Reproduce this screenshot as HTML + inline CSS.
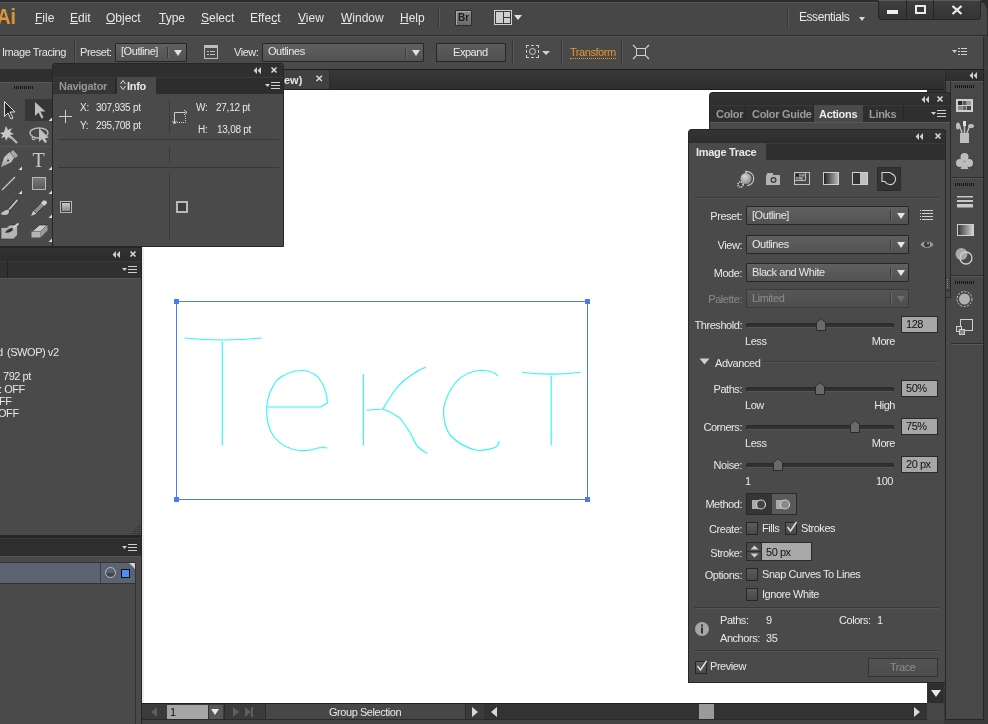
<!DOCTYPE html>
<html><head><meta charset="utf-8">
<style>
*{margin:0;padding:0;box-sizing:border-box}
html,body{width:988px;height:724px;overflow:hidden;background:#3e3e3e;font-family:"Liberation Sans",sans-serif;font-size:11px;color:#dcdcdc}
.a{position:absolute}
svg{will-change:transform}
.t{position:absolute;white-space:nowrap;line-height:1;letter-spacing:-0.45px;will-change:transform}
.menu{top:12px;font-size:12px;color:#e8e8e8;letter-spacing:0}
.menu u{text-decoration:underline;text-underline-offset:1px;text-decoration-thickness:1px}
.vsep{position:absolute;width:2px;border-left:1px solid #393939;border-right:1px solid #575757}
.dd{position:absolute;border:1px solid #262626;background:linear-gradient(#606060,#525252);border-radius:1px}
.dd .dv{position:absolute;top:3px;bottom:3px;width:2px;border-left:1px solid #3c3c3c;border-right:1px solid #6a6a6a}
.arr{position:absolute;width:0;height:0;border-left:4px solid transparent;border-right:4px solid transparent;border-top:6px solid #e0e0e0}
.btn{position:absolute;border:1px solid #262626;background:linear-gradient(#5c5c5c,#505050)}
.phdr{position:absolute;background:#2f2f2f}
.tabrow{position:absolute;background:#2d2d2d}
.pbody{position:absolute;background:#4a4a4a}
.tab{position:absolute;font-weight:bold;color:#9b9b9b;font-size:11px;letter-spacing:-0.3px}
</style></head><body>
<!-- ============ MENU BAR ============ -->
<div class="a" style="left:0;top:0;width:988px;height:36px;background:#474747;border-top:2px solid #2c2c2c;border-bottom:1px solid #2b2b2b"></div>
<div class="a" style="left:0;top:2px;width:988px;height:1px;background:#555"></div>
<div class="a" style="left:970px;top:0;width:18px;height:35px;background:#2c2c2c"></div>
<div class="a" style="left:970px;top:2px;width:18px;height:33px;background:#474747;border-radius:0 9px 0 0;border-top:1px solid #555;border-right:1px solid #2c2c2c"></div>
<div class="t" style="left:-3px;top:6px;font-size:22px;font-weight:bold;color:#e09a35;letter-spacing:0;transform:scaleX(0.85);transform-origin:left">Ai</div>
<div class="t menu" style="left:35px"><u>F</u>ile</div>
<div class="t menu" style="left:70px"><u>E</u>dit</div>
<div class="t menu" style="left:106px"><u>O</u>bject</div>
<div class="t menu" style="left:159px"><u>T</u>ype</div>
<div class="t menu" style="left:201px"><u>S</u>elect</div>
<div class="t menu" style="left:250px">Effe<u>c</u>t</div>
<div class="t menu" style="left:298px"><u>V</u>iew</div>
<div class="t menu" style="left:341px"><u>W</u>indow</div>
<div class="t menu" style="left:400px"><u>H</u>elp</div>
<div class="vsep" style="left:438px;top:8px;height:20px"></div>
<!-- Br -->
<div class="a" style="left:455px;top:10px;width:17px;height:16px;background:linear-gradient(#8c8c8c,#6a6a6a);border:1px solid #2e2e2e;border-radius:1px;box-shadow:inset 1px 1px 0 #a8a8a8"></div>
<div class="t" style="left:458px;top:13px;font-size:10px;font-weight:bold;color:#1e1e1e;letter-spacing:0">Br</div>
<!-- layout icon -->
<div class="a" style="left:494px;top:10px;width:18px;height:15px;border:1px solid #d0d0d0;background:#3a3a3a"></div>
<div class="a" style="left:496px;top:12px;width:7px;height:11px;background:#cfcfcf"></div>
<div class="a" style="left:504px;top:12px;width:6px;height:5px;background:#cfcfcf"></div>
<div class="a" style="left:504px;top:18px;width:6px;height:5px;background:#cfcfcf"></div>
<div class="arr" style="left:514px;top:15px;border-left-width:4px;border-right-width:4px;border-top-width:5px"></div>
<div class="vsep" style="left:787px;top:8px;height:20px"></div>
<div class="t" style="left:799px;top:11px;font-size:12px;color:#e8e8e8">Essentials</div>
<div class="arr" style="left:859px;top:17px;border-left-width:3px;border-right-width:3px;border-top-width:4px;border-top-color:#d8d8d8"></div>
<!-- window buttons -->
<div class="a" style="left:878px;top:0px;width:103px;height:20px;background:linear-gradient(#3e3e3e,#343434);border:1px solid #262626;border-top-color:#5a5a5a;border-radius:0 0 4px 4px"></div>
<div class="a" style="left:906px;top:0;width:1px;height:19px;background:#262626"></div>
<div class="a" style="left:933px;top:0;width:1px;height:19px;background:#262626"></div>
<div class="a" style="left:887px;top:10px;width:11px;height:4px;background:#f0f0f0"></div>
<div class="a" style="left:915px;top:5px;width:11px;height:9px;border:2px solid #ececec"></div>
<svg class="a" style="left:951px;top:5px" width="12" height="10" viewBox="0 0 12 10"><path d="M1.5 1l9 8M10.5 1l-9 8" stroke="#ececec" stroke-width="2.3"/></svg>

<!-- ============ CONTROL BAR ============ -->
<div class="a" style="left:0;top:36px;width:984px;height:34px;background:#4a4a4a;border-top:1px solid #565656;border-bottom:1px solid #1e1e1e;border-right:1px solid #2a2a2a"></div>
<div class="t" style="left:2px;top:47px;font-size:11px;color:#e6e6e6">Image Tracing</div>
<div class="vsep" style="left:74px;top:40px;height:24px"></div>
<div class="t" style="left:80px;top:47px;color:#e8e8e8">Preset:</div>
<div class="dd" style="left:115px;top:43px;width:72px;height:19px"><div class="dv" style="left:51px"></div><div class="arr" style="left:58px;top:6px"></div></div>
<div class="t" style="left:121px;top:46px;color:#e8e8e8">[Outline]</div>
<!-- panel icon -->
<div class="a" style="left:204px;top:45px;width:14px;height:14px;border:1px solid #bdbdbd;border-top-width:3px"></div>
<div class="a" style="left:207px;top:51px;width:2px;height:1px;background:#bdbdbd"></div>
<div class="a" style="left:210px;top:51px;width:5px;height:1px;background:#bdbdbd"></div>
<div class="a" style="left:207px;top:54px;width:2px;height:1px;background:#bdbdbd"></div>
<div class="a" style="left:210px;top:54px;width:5px;height:1px;background:#bdbdbd"></div>
<div class="t" style="left:234px;top:47px;color:#e8e8e8">View:</div>
<div class="dd" style="left:262px;top:43px;width:162px;height:19px"><div class="dv" style="left:142px"></div><div class="arr" style="left:149px;top:6px"></div></div>
<div class="t" style="left:268px;top:46px;color:#e8e8e8">Outlines</div>
<div class="btn" style="left:436px;top:43px;width:70px;height:19px"></div>
<div class="t" style="left:453px;top:47px;color:#e8e8e8">Expand</div>
<div class="vsep" style="left:512px;top:40px;height:24px"></div>
<!-- dashed icon -->
<div class="a" style="left:526px;top:45px;width:13px;height:13px;border:1px dashed #cfcfcf"></div>
<div class="a" style="left:529px;top:48px;width:7px;height:7px;border:1px solid #cfcfcf;border-radius:50%"></div>
<div class="arr" style="left:542px;top:51px;border-left-width:4px;border-right-width:4px;border-top-width:4px;border-top-color:#d0d0d0"></div>
<div class="vsep" style="left:561px;top:40px;height:24px"></div>
<div class="t" style="left:570px;top:47px;color:#e8962a">Transform</div>
<div class="a" style="left:570px;top:58px;width:46px;height:1px;border-top:1px dotted #e8962a"></div>
<div class="vsep" style="left:621px;top:40px;height:24px"></div>
<!-- isolate icon -->
<svg class="a" style="left:632px;top:44px" width="18" height="16" viewBox="0 0 18 16"><rect x="4.5" y="4.5" width="9" height="7" fill="none" stroke="#d0d0d0"/><path d="M1 1l3 3M17 1l-3 3M1 15l3-3M17 15l-3-3" stroke="#d0d0d0" stroke-width="1.2"/></svg>
<!-- menu icon -->
<svg class="a" style="left:952px;top:47px" width="16" height="10" viewBox="0 0 16 10"><path d="M0 3h5l-2.5 3z" fill="#cfcfcf"/><path d="M6 1.5h2M6 4.5h2M6 7.5h2M9 1.5h6M9 4.5h6M9 7.5h6" stroke="#cfcfcf"/></svg>

<!-- ============ DOC TAB STRIP ============ -->
<div class="a" style="left:0;top:70px;width:944px;height:20px;background:linear-gradient(#383838,#2e2e2e);border-bottom:1px solid #1e1e1e"></div>
<div class="a" style="left:142px;top:90px;width:785px;height:613px;background:#fff"></div>

<!-- doc tab -->
<div class="a" style="left:142px;top:70px;width:188px;height:19px;background:#414141;border-right:1px solid #2e2e2e"></div>
<div class="t" style="left:284px;top:75px;font-weight:bold;color:#e6e6e6;font-size:11px;letter-spacing:0">ew)</div>
<div class="t" style="left:315px;top:74px;font-size:10px;font-weight:bold;color:#d8d8d8">✕</div>
<!-- canvas left shadow -->
<div class="a" style="left:142px;top:90px;width:2px;height:613px;background:#ececec"></div>


<!-- ============ ARTWORK ============ -->
<svg class="a" style="left:142px;top:90px" width="785" height="613" viewBox="142 90 785 613">
 <g fill="none" stroke="#30f4ff" stroke-width="1.15" stroke-linejoin="round">
  <path d="M184.6 338Q223 342 261.8 338"/>
  <path d="M222.3 341.5V445.6"/>
  <path d="M266.7 407H320.5L327.4 403Q327 388 318 377Q310 370 300.7 370.5Q288 371 277 380Q268 392 266.7 407Q266 426 274 437Q284 449 300 450.5Q310 451 318 448Q323 447 327.4 448"/>
  <path d="M363.4 374V445.6"/>
  <path d="M366.4 410.2L382.9 409Q388 400 395 390Q403 380 413 374Q420 369 425.9 367.2"/>
  <path d="M382.9 409Q392 412 400 418Q406 426 410.7 433.5Q414 441 417 446Q422 451 427.2 453.2"/>
  <path d="M498 376Q495 371 481.6 370.2Q466 371 456 382Q447 393 443.6 408.2Q443 425 450 435Q461 447 477.8 450.5Q490 450 496 447Q499 445 498.8 441"/>
  <path d="M522 372.3Q551 376 580.8 372.3"/>
  <path d="M551.2 376V445.6"/>
 </g>
 <rect x="176.5" y="301.5" width="411" height="198" fill="none" stroke="#4a7cf0" stroke-width="1"/>
 <g fill="#4a7cf0"><rect x="174" y="299" width="5" height="5"/><rect x="585" y="299" width="5" height="5"/><rect x="174" y="497" width="5" height="5"/><rect x="585" y="497" width="5" height="5"/></g>
</svg>
<!-- ============ TOOLS PANEL ============ -->
<div class="a" style="left:0;top:69px;width:53px;height:13px;background:#2f2f2f"></div>
<div class="pbody" style="left:0;top:82px;width:52px;height:164px;border-top:1px solid #585858"></div>
<div class="a" style="left:14px;top:86px;width:20px;height:3px;background:repeating-linear-gradient(90deg,#151515 0 1px,transparent 1px 2px)"></div>
<div class="a" style="left:25px;top:99px;width:27px;height:22px;background:#363636"></div>
<div class="a" style="left:0;top:146px;width:52px;height:1px;background:#3a3a3a;border-bottom:1px solid #555"></div>
<svg class="a" style="left:0;top:95px" width="52" height="151" viewBox="0 0 52 151">
 <!-- selection -->
 <path d="M4.5 6.5v15l3.5-3.5 3 6 2-1-3-6h5z" fill="#2a2a2a" stroke="#e0e0e0" stroke-width="1"/>
 <!-- direct selection -->
 <path d="M35 7v14l3.5-3.5 3 6 2-1-3-6h5z" fill="#bdbdbd"/>
 
 <!-- magic wand -->
 <g transform="translate(0,-4)"><path d="M6 35l2 4 4-2-2 4 4 2-4 1 1 4-3-2-2 4-1-4-4 1 2-3-3-2 4-1z" fill="#c8c8c8"/>
 <path d="M10 45l7 7" stroke="#bbb" stroke-width="2"/></g>
 <!-- lasso -->
 <ellipse cx="39" cy="38" rx="9" ry="5" fill="none" stroke="#bdbdbd" stroke-width="1.4"/>
 <path d="M39 33v14l3-3 3 4 2-1-2-4h4z" fill="#c0c0c0"/>
 <path d="M33 41c-2 2 0 5 2 3" fill="none" stroke="#bbb" stroke-width="1.2"/>
 <!-- pen -->
 <path d="M1.5 71.5L4.5 62L9.5 57.5L14 62.5L11 67z" fill="#bdbdbd" stroke="#d0d0d0" stroke-width="0.5"/>
 <path d="M10.5 57.5L13 55L18 60.5L15.5 63z" fill="#a8a8a8"/>
 <circle cx="8" cy="65.5" r="1" fill="#222"/>
 <path d="M2 71L8 65.5" stroke="#777" stroke-width="0.6"/>
 <!-- Type T -->
 <text x="32.5" y="71.5" font-family="Liberation Serif" font-size="20" fill="#c8c8c8">T</text>
 
 <!-- line -->
 <path d="M2 95l13-13" stroke="#c8c8c8" stroke-width="1.3"/>
 
 <!-- rect -->
 <defs><linearGradient id="rg" x1="0" y1="0" x2="0" y2="1"><stop offset="0" stop-color="#7a7a7a"/><stop offset="1" stop-color="#595959"/></linearGradient></defs><rect x="32.5" y="82.5" width="13" height="12" fill="url(#rg)" stroke="#b8b8b8"/>
 
 <!-- paintbrush -->
 <path d="M9 114.5L17 105.5" stroke="#222" stroke-width="3.4" stroke-linecap="round"/>
 <path d="M9.5 114L17 105.5" stroke="#b4b4b4" stroke-width="2.2" stroke-linecap="round"/>
 <path d="M0.5 119Q4 115 8.5 114.5Q10 117 7.5 119.5Q4 120.5 0.5 119z" fill="#c4c4c4"/>
 <!-- pencil -->
 <path d="M31 121L36.6 118.6L33.4 115.4z" fill="#cccccc"/>
 <path d="M36.6 118.6L44.1 111.1L40.9 107.9L33.4 115.4z" fill="#8c8c8c" stroke="#222" stroke-width="0.6"/>
 <path d="M44.1 111.1L46.6 108.6Q47.5 106 45 105.4L43.4 105.4L40.9 107.9z" fill="#d4d4d4"/>
 <!-- blob brush -->
 <path d="M1 132.5H7L9.5 130H16L17.5 131.5V140L13.5 144H1z" fill="#b4b4b4" stroke="#262626" stroke-width="0.5"/>
 <path d="M5 137.5Q8 133 13 133L12.5 135.5Q9 138.5 5 137.5z" fill="#333"/>
 <path d="M13 133L18.5 128.5" stroke="#cfcfcf" stroke-width="2"/>
 <!-- eraser -->
 <path d="M32 136.5L39.5 130H47.5L40.5 136.5z" fill="#c8c8c8" stroke="#1e1e1e" stroke-width="0.6"/>
 <path d="M31.5 136.5H40.5V142.5H31.5z" fill="#b4b4b4"/>
 <path d="M40.5 136.5L47.5 130V135.5L40.5 142.5z" fill="#9a9a9a"/>
<path d="M52 26h-3.5l3.5-3.5z" fill="#e0e0e0"/><path d="M22 75h-3.5l3.5-3.5z" fill="#e0e0e0"/><path d="M52 75h-3.5l3.5-3.5z" fill="#e0e0e0"/><path d="M22 99h-3.5l3.5-3.5z" fill="#e0e0e0"/><path d="M52 99h-3.5l3.5-3.5z" fill="#e0e0e0"/><path d="M52 123h-3.5l3.5-3.5z" fill="#e0e0e0"/><path d="M52 147h-3.5l3.5-3.5z" fill="#e0e0e0"/>
</svg>

<!-- ============ NAVIGATOR / INFO ============ -->
<div class="a" style="left:52px;top:63px;width:232px;height:184px;background:#4a4a4a;border:1px solid #262626;border-radius:3px 3px 0 0"></div>
<div class="phdr" style="left:53px;top:64px;width:230px;height:13px;border-radius:3px 3px 0 0"></div>
<div class="tabrow" style="left:53px;top:77px;width:230px;height:17px;border-top:1px solid #3a3a3a"></div>
<div class="a" style="left:53px;top:78px;width:63px;height:16px;background:#353535;border-right:1px solid #262626"></div>
<div class="t tab" style="left:59px;top:81px;color:#959595">Navigator</div>
<div class="a" style="left:117px;top:77px;width:39px;height:17px;background:#4a4a4a"></div>
<div class="t tab" style="left:127px;top:81px;color:#e8e8e8">Info</div>
<svg class="a" style="left:120px;top:79px" width="6" height="12" viewBox="0 0 6 12"><path d="M0.5 5l2.5-3.5 2.5 3.5M0.5 7l2.5 3.5 2.5-3.5" fill="none" stroke="#ddd" stroke-width="1"/></svg>
<svg class="a" style="left:253px;top:66px" width="30" height="10" viewBox="0 0 30 10"><path d="M4 1v7l-3.5-3.5zM8 1v7l-3.5-3.5z" fill="#cfcfcf"/><path d="M18.5 1.5l5 5M23.5 1.5l-5 5" stroke="#dcdcdc" stroke-width="1.5"/></svg>
<svg class="a" style="left:265px;top:81px" width="16" height="10" viewBox="0 0 16 10"><path d="M0 3h5l-2.5 3z" fill="#cfcfcf"/><path d="M6 1.5h9M6 4.5h9M6 7.5h9" stroke="#cfcfcf"/></svg>
<!-- info content -->
<div class="a" style="left:59px;top:116px;width:13px;height:1px;background:#cfcfcf"></div>
<div class="a" style="left:65px;top:110px;width:1px;height:13px;background:#cfcfcf"></div>
<div class="t" style="left:80px;top:103px;font-size:10px;color:#e8e8e8;letter-spacing:-0.25px">X:</div>
<div class="t" style="left:96px;top:103px;font-size:10px;color:#e8e8e8;letter-spacing:-0.25px">307,935 pt</div>
<div class="t" style="left:80px;top:121px;font-size:10px;color:#e8e8e8;letter-spacing:-0.25px">Y:</div>
<div class="t" style="left:96px;top:121px;font-size:10px;color:#e8e8e8;letter-spacing:-0.25px">295,708 pt</div>
<div class="a" style="left:169px;top:100px;width:1px;height:34px;background:#3a3a3a"></div>
<svg class="a" style="left:172px;top:108px" width="16" height="17" viewBox="0 0 16 17"><path d="M2.5 15V4.5h11" fill="none" stroke="#cfcfcf"/><path d="M12 2l3 2.5-3 2.5M0.5 13l2 3 2-3" fill="none" stroke="#cfcfcf"/><path d="M5 14.5h8.5V7" fill="none" stroke="#cfcfcf" stroke-dasharray="1 1"/></svg>
<div class="t" style="left:196px;top:103px;font-size:10px;color:#e8e8e8;letter-spacing:-0.25px">W:</div>
<div class="t" style="left:216px;top:103px;font-size:10px;color:#e8e8e8;letter-spacing:-0.25px">27,12 pt</div>
<div class="t" style="left:198px;top:125px;font-size:10px;color:#e8e8e8;letter-spacing:-0.25px">H:</div>
<div class="t" style="left:217px;top:125px;font-size:10px;color:#e8e8e8;letter-spacing:-0.25px">13,08 pt</div>
<div class="a" style="left:58px;top:139px;width:221px;height:1px;background:#383838"></div>
<div class="a" style="left:169px;top:146px;width:1px;height:17px;background:#3a3a3a"></div>
<div class="a" style="left:58px;top:167px;width:221px;height:1px;background:#383838"></div>
<div class="a" style="left:169px;top:174px;width:1px;height:66px;background:#3a3a3a"></div>
<div class="a" style="left:60px;top:201px;width:12px;height:12px;border:1px solid #b8b8b8;background:#3c3c3c"></div>
<div class="a" style="left:62px;top:203px;width:8px;height:8px;background:linear-gradient(#c8c8c8,#8a8a8a)"></div>
<div class="a" style="left:176px;top:201px;width:12px;height:12px;border:2px solid #b8b8b8;background:#3c3c3c"></div>

<!-- ============ LEFT PANEL 2 (doc info) ============ -->
<div class="a" style="left:0;top:246px;width:142px;height:478px;background:#262626"></div>
<div class="phdr" style="left:0;top:248px;width:141px;height:13px;background:linear-gradient(#333,#2b2b2b)"></div>
<div class="tabrow" style="left:0;top:261px;width:141px;height:17px;background:#303030;border-top:1px solid #3a3a3a"></div>
<div class="a" style="left:7px;top:261px;width:1px;height:17px;background:#222"></div>
<svg class="a" style="left:112px;top:250px" width="30" height="10" viewBox="0 0 30 10"><path d="M4 1v7l-3.5-3.5zM8 1v7l-3.5-3.5z" fill="#cfcfcf"/><path d="M9.5 1.5l5 5M14.5 1.5l-5 5" stroke="#dcdcdc" stroke-width="1.5" transform="translate(9,0)"/></svg>
<svg class="a" style="left:122px;top:265px" width="16" height="10" viewBox="0 0 16 10"><path d="M0 3h5l-2.5 3z" fill="#cfcfcf"/><path d="M6 1.5h9M6 4.5h9M6 7.5h9" stroke="#cfcfcf"/></svg>
<div class="pbody" style="left:0;top:278px;width:141px;height:257px;border-top:1px solid #555"></div>
<div class="t" style="left:-3px;top:347px;color:#e8e8e8">d</div>
<div class="t" style="left:7px;top:347px;color:#e8e8e8">(SWOP) v2</div>
<div class="t" style="left:3px;top:371px;color:#e8e8e8">792 pt</div>
<div class="t" style="left:-1px;top:384px;color:#e8e8e8">: OFF</div>
<div class="t" style="left:-1px;top:396px;color:#e8e8e8">FF</div>
<div class="t" style="left:-2px;top:408px;color:#e8e8e8">OFF</div>
<svg class="a" style="left:129px;top:523px" width="12" height="12" viewBox="0 0 12 12"><g fill="#2a2a2a"><rect x="10" y="2" width="1" height="1"/><rect x="8" y="4" width="1" height="1"/><rect x="10" y="4" width="1" height="1"/><rect x="6" y="6" width="1" height="1"/><rect x="8" y="6" width="1" height="1"/><rect x="10" y="6" width="1" height="1"/><rect x="4" y="8" width="1" height="1"/><rect x="6" y="8" width="1" height="1"/><rect x="8" y="8" width="1" height="1"/><rect x="10" y="8" width="1" height="1"/><rect x="2" y="10" width="1" height="1"/><rect x="4" y="10" width="1" height="1"/><rect x="6" y="10" width="1" height="1"/><rect x="8" y="10" width="1" height="1"/><rect x="10" y="10" width="1" height="1"/></g></svg>

<!-- ============ LEFT PANEL 3 (layers) ============ -->
<div class="tabrow" style="left:0;top:538px;width:141px;height:18px;background:#2e2e2e;border-top:1px solid #3a3a3a"></div>
<svg class="a" style="left:122px;top:543px" width="16" height="10" viewBox="0 0 16 10"><path d="M0 3h5l-2.5 3z" fill="#cfcfcf"/><path d="M6 1.5h9M6 4.5h9M6 7.5h9" stroke="#cfcfcf"/></svg>
<div class="pbody" style="left:0;top:556px;width:141px;height:168px;border-top:1px solid #555"></div>
<div class="a" style="left:0;top:562px;width:136px;height:22px;background:#5b6373;border:1px solid #333;border-left:none"></div>
<div class="a" style="left:100px;top:563px;width:1px;height:20px;background:#3b3f48"></div>
<div class="a" style="left:105px;top:567px;width:11px;height:11px;border:1.5px solid #bdbdbd;border-radius:50%;background:linear-gradient(#5b6373 50%,#3e4450 50%)"></div>
<div class="a" style="left:121px;top:569px;width:9px;height:9px;background:#4f8cf8;border:1px solid #111"></div>
<svg class="a" style="left:129px;top:563px" width="6" height="6" viewBox="0 0 6 6"><path d="M0 0h6v6z" fill="#d0d0d0"/></svg>
<div class="a" style="left:135px;top:584px;width:1px;height:140px;background:#333"></div>
<div class="a" style="left:141px;top:538px;width:1px;height:186px;background:#262626"></div>

<!-- ============ STATUS BAR ============ -->
<div class="a" style="left:142px;top:703px;width:846px;height:21px;background:#444"></div>
<div class="a" style="left:142px;top:703px;width:785px;height:17px;background:#3b3b3b;border-top:1px solid #232323;border-bottom:1px solid #2a2a2a"></div>
<svg class="a" style="left:149px;top:706px" width="10" height="12" viewBox="0 0 10 12"><path d="M8 1v10L2 6z" fill="#5e5e5e"/></svg>
<div class="a" style="left:167px;top:705px;width:41px;height:14px;background:#a6a6a6"></div>
<div class="t" style="left:170px;top:707px;font-size:11px;color:#111">1</div>
<div class="a" style="left:208px;top:705px;width:15px;height:14px;background:#575757;border-left:1px solid #333"></div>
<div class="arr" style="left:211px;top:709px;border-top-color:#e8e8e8;border-left-width:4px;border-right-width:4px;border-top-width:6px"></div>
<div class="a" style="left:224px;top:704px;width:1px;height:15px;background:#2a2a2a"></div>
<svg class="a" style="left:231px;top:706px" width="24" height="12" viewBox="0 0 24 12"><path d="M2 1v10l6-5z" fill="#5e5e5e"/><path d="M14 1v10l6-5zM20 1h2v10h-2z" fill="#5e5e5e"/></svg>
<div class="a" style="left:265px;top:704px;width:201px;height:15px;background:#474747;border-left:1px solid #2e2e2e;border-right:1px solid #2e2e2e"></div>
<div class="t" style="left:329px;top:707px;font-size:11px;color:#e8e8e8">Group Selection</div>
<svg class="a" style="left:468px;top:706px" width="14" height="12" viewBox="0 0 14 12"><path d="M4 1v10l6-5z" fill="#d8d8d8"/></svg>
<div class="a" style="left:484px;top:704px;width:443px;height:15px;background:#333"></div>
<svg class="a" style="left:488px;top:706px" width="12" height="12" viewBox="0 0 12 12"><path d="M9 1v10L3 6z" fill="#d8d8d8"/></svg>
<div class="a" style="left:699px;top:704px;width:15px;height:15px;background:#9a9a9a"></div>
<svg class="a" style="left:911px;top:706px" width="12" height="12" viewBox="0 0 12 12"><path d="M3 1v10l6-5z" fill="#d8d8d8"/></svg>
<!-- vertical scrollbar remnant -->
<div class="a" style="left:927px;top:90px;width:17px;height:613px;background:#333"></div>
<div class="a" style="left:928px;top:684px;width:15px;height:19px;background:#2e2e2e"></div>
<div class="arr" style="left:931px;top:690px;border-top-color:#e8e8e8;border-left-width:5px;border-right-width:5px;border-top-width:7px"></div>
<div class="a" style="left:927px;top:704px;width:17px;height:15px;background:#474747"></div>

<!-- ============ RIGHT DOCK ============ -->
<div class="a" style="left:944px;top:70px;width:44px;height:654px;background:#3a3a3a"></div>
<div class="a" style="left:945px;top:70px;width:39px;height:650px;background:#262626"></div>
<div class="phdr" style="left:946px;top:70px;width:37px;height:11px;background:linear-gradient(#353535,#2c2c2c)"></div>
<svg class="a" style="left:969px;top:72px" width="10" height="8" viewBox="0 0 10 8"><path d="M4 0v7L0.5 3.5zM8 0v7L4.5 3.5z" fill="#cfcfcf"/></svg>
<div class="pbody" style="left:946px;top:81px;width:37px;height:638px;background:#484848;border-top:1px solid #585858"></div>
<div class="a" style="left:955px;top:85px;width:20px;height:3px;background:repeating-linear-gradient(90deg,#151515 0 1px,transparent 1px 2px)"></div>
<div class="a" style="left:951px;top:177px;width:32px;height:2px;border-top:1px solid #2e2e2e;border-bottom:1px solid #585858"></div>
<div class="a" style="left:955px;top:183px;width:20px;height:3px;background:repeating-linear-gradient(90deg,#151515 0 1px,transparent 1px 2px)"></div>
<div class="a" style="left:951px;top:275px;width:32px;height:2px;border-top:1px solid #2e2e2e;border-bottom:1px solid #585858"></div>
<div class="a" style="left:955px;top:281px;width:20px;height:3px;background:repeating-linear-gradient(90deg,#151515 0 1px,transparent 1px 2px)"></div>
<div class="a" style="left:951px;top:343px;width:32px;height:2px;border-top:1px solid #2e2e2e;border-bottom:1px solid #585858"></div>
<div class="a" style="left:950px;top:81px;width:1px;height:217px;background:#2a2a2a"></div>
<div class="a" style="left:945px;top:290px;width:5px;height:1px;background:#2e2e2e"></div>
<div class="a" style="left:945px;top:297px;width:6px;height:1px;background:#2a2a2a"></div>
<div class="a" style="left:945px;top:279px;width:4px;height:10px;background:repeating-linear-gradient(90deg,#8a8a8a 0 1px,transparent 1px 2px),transparent;-webkit-mask:repeating-linear-gradient(#000 0 1px,transparent 1px 2px)"></div>
<svg class="a" style="left:946px;top:95px" width="37" height="245" viewBox="0 0 37 245">
 <!-- swatches -->
 <rect x="10.5" y="4.5" width="16" height="12" fill="#cfcfcf" stroke="#cfcfcf"/>
 <rect x="12" y="6" width="4" height="4" fill="#2a2a2a"/><rect x="16.5" y="6" width="4" height="4" fill="#555"/><rect x="21" y="6" width="4" height="4" fill="#999"/>
 <rect x="12" y="11" width="4" height="4" fill="#888"/><rect x="16.5" y="11" width="4" height="4" fill="#666"/><rect x="21" y="11" width="4" height="4" fill="#444"/>
 <!-- brushes -->
 <rect x="14" y="38" width="9" height="10" fill="#bdbdbd"/>
 <path d="M16 38l-3-9M18.5 38V26M21 38l3-8" stroke="#bdbdbd" stroke-width="1.5"/>
 <ellipse cx="12" cy="31" rx="2" ry="3.5" fill="#bdbdbd"/><ellipse cx="25" cy="31" rx="3" ry="2" fill="#bdbdbd"/><rect x="17" y="26" width="3" height="5" fill="#ddd"/>
 <!-- club -->
 <circle cx="18.5" cy="62" r="4" fill="#bdbdbd"/><circle cx="14" cy="68" r="4" fill="#bdbdbd"/><circle cx="23" cy="68" r="4" fill="#bdbdbd"/>
 <path d="M18.5 66l-4 8h8z" fill="#bdbdbd"/>
 <!-- stroke lines -->
 <rect x="11" y="101" width="16" height="1.5" fill="#c8c8c8"/><rect x="11" y="105" width="16" height="2" fill="#c8c8c8"/><rect x="11" y="109" width="16" height="3.5" fill="#c8c8c8"/>
 <!-- gradient -->
 <defs><linearGradient id="g1" x1="0" x2="1"><stop offset="0" stop-color="#333"/><stop offset="1" stop-color="#d8d8d8"/></linearGradient>
 <linearGradient id="g2" x1="0" x2="1"><stop offset="0" stop-color="#2a2a2a"/><stop offset="1" stop-color="#c8c8c8"/></linearGradient></defs>
 <rect x="11.5" y="129.5" width="16" height="11" fill="url(#g1)" stroke="#cfcfcf"/>
 <!-- transparency -->
 <circle cx="15.5" cy="159" r="6" fill="#aaa"/><circle cx="20" cy="163" r="6" fill="none" stroke="#cfcfcf" stroke-width="1.3"/>
 <!-- appearance dashed circle -->
 <circle cx="18.5" cy="204" r="7.5" fill="none" stroke="#cfcfcf" stroke-dasharray="2 1.5"/>
 <circle cx="18.5" cy="204" r="5.5" fill="#b0b0b0"/>
 <!-- transform -->
 <rect x="14.5" y="224.5" width="12" height="11" fill="none" stroke="#cfcfcf"/>
 <rect x="10.5" y="231.5" width="5" height="5" fill="#555" stroke="#cfcfcf"/>
 <rect x="13.5" y="234.5" width="5" height="5" fill="#888" stroke="#cfcfcf"/>
</svg>

<!-- ============ ACTIONS PANEL ============ -->
<div class="a" style="left:709px;top:92px;width:242px;height:38px;background:#262626;border-radius:4px 4px 0 0"></div>
<div class="phdr" style="left:710px;top:93px;width:240px;height:12px;background:linear-gradient(#353535,#2d2d2d);border-radius:3px 3px 0 0"></div>
<div class="tabrow" style="left:710px;top:105px;width:240px;height:17px;background:#2f2f2f;border-top:1px solid #3a3a3a"></div>
<div class="a" style="left:745px;top:105px;width:1px;height:17px;background:#262626"></div>
<div class="a" style="left:813px;top:105px;width:1px;height:17px;background:#262626"></div>
<div class="a" style="left:814px;top:105px;width:49px;height:17px;background:#4a4a4a"></div>
<div class="a" style="left:903px;top:105px;width:1px;height:17px;background:#262626"></div>
<div class="t tab" style="left:716px;top:109px">Color</div>
<div class="t tab" style="left:752px;top:109px">Color Guide</div>
<div class="t tab" style="left:819px;top:109px;color:#ececec">Actions</div>
<div class="t tab" style="left:869px;top:109px">Links</div>
<svg class="a" style="left:921px;top:95px" width="30" height="10" viewBox="0 0 30 10"><path d="M4 1v7l-3.5-3.5zM8 1v7l-3.5-3.5z" fill="#cfcfcf"/><path d="M16.5 1.5l5 5M21.5 1.5l-5 5" stroke="#dcdcdc" stroke-width="1.5"/></svg>
<svg class="a" style="left:931px;top:109px" width="16" height="10" viewBox="0 0 16 10"><path d="M0 3h5l-2.5 3z" fill="#cfcfcf"/><path d="M6 1.5h9M6 4.5h9M6 7.5h9" stroke="#cfcfcf"/></svg>
<div class="pbody" style="left:710px;top:122px;width:240px;height:8px;border-top:1px solid #585858"></div>

<!-- ============ IMAGE TRACE PANEL ============ -->
<div class="a" style="left:688px;top:129px;width:258px;height:554px;background:#262626;border-radius:4px 4px 0 0"></div>
<div class="phdr" style="left:689px;top:130px;width:256px;height:13px;background:linear-gradient(#353535,#2d2d2d);border-radius:3px 3px 0 0"></div>
<svg class="a" style="left:915px;top:132px" width="30" height="10" viewBox="0 0 30 10"><path d="M4 1v7l-3.5-3.5zM8 1v7l-3.5-3.5z" fill="#cfcfcf"/><path d="M20.5 1.5l5 5M25.5 1.5l-5 5" stroke="#dcdcdc" stroke-width="1.5"/></svg>
<div class="tabrow" style="left:689px;top:143px;width:256px;height:17px;background:#2f2f2f;border-top:1px solid #3a3a3a"></div>
<div class="a" style="left:689px;top:143px;width:77px;height:17px;background:#4a4a4a"></div>
<div class="t tab" style="left:696px;top:147px;color:#e8e8e8">Image Trace</div>
<div class="pbody" style="left:689px;top:160px;width:256px;height:522px"></div>
<!-- icons row -->
<svg class="a" style="left:734px;top:168px" width="170" height="24" viewBox="0 0 170 24">
 <defs><linearGradient id="g3" x1="0" x2="1"><stop offset="0" stop-color="#1e1e1e"/><stop offset="1" stop-color="#bdbdbd"/></linearGradient></defs>
 <!-- auto color -->
 <defs><radialGradient id="ac" cx="0.4" cy="0.35" r="0.7"><stop offset="0" stop-color="#d8d8d8"/><stop offset="1" stop-color="#8a8a8a"/></radialGradient></defs>
 <circle cx="12" cy="10.5" r="5.5" fill="url(#ac)"/>
 <path d="M12.5 3.5A7 7 0 0 1 13 17.5" fill="none" stroke="#d0d0d0" stroke-width="1.1"/>
 <path d="M11 2.5l3 1-2.5 2z" fill="#d0d0d0"/>
 <circle cx="6.5" cy="16.5" r="2.6" fill="none" stroke="#c8c8c8" stroke-width="1.8" stroke-dasharray="1.2 0.9"/>
 <circle cx="6.5" cy="16.5" r="1" fill="#444"/>
 <!-- camera -->
 <rect x="32" y="7" width="14" height="10" rx="0.5" fill="#b4b4b4"/><rect x="33" y="5" width="6" height="3" fill="#b4b4b4"/>
 <circle cx="39.5" cy="12" r="3" fill="#3a3a3a"/><circle cx="39.5" cy="12" r="1.8" fill="#a8a8a8"/>
 <!-- grid -->
 <rect x="60.5" y="4.5" width="15" height="12" fill="#4a4a4a" stroke="#c4c4c4"/>
 <rect x="62" y="6" width="2.5" height="2.5" fill="#1a1a1a"/><rect x="65" y="6" width="2.5" height="2.5" fill="#8a8a8a"/><rect x="68" y="6" width="2.5" height="2.5" fill="#999"/>
 <rect x="62" y="9" width="2.5" height="2.5" fill="#8a8a8a"/><rect x="65" y="9" width="2.5" height="2.5" fill="#9a9a9a"/>
 <path d="M71.5 5v7.5h-10.5M68 9v3.5" fill="none" stroke="#c4c4c4" stroke-width="0.9"/>
 <!-- gradient -->
 <rect x="89.5" y="4.5" width="15" height="12" fill="url(#g3)" stroke="#cfcfcf"/>
 <!-- half -->
 <rect x="118.5" y="4.5" width="15" height="12" fill="#c0c0c0" stroke="#cfcfcf"/>
 <rect x="119" y="5" width="7" height="11" fill="#333"/>
</svg>
<div class="a" style="left:877px;top:167px;width:24px;height:24px;background:#333;border:1px solid #2c2c2c"></div>
<svg class="a" style="left:880px;top:171px" width="18" height="16" viewBox="0 0 18 16"><path d="M2 1.5H10L11.5 2.6A5.6 5.6 0 1 1 5 10.5H2z" fill="none" stroke="#d4d4d4" stroke-width="1.1"/></svg>
<div class="a" style="left:694px;top:197px;width:245px;height:2px;border-top:1px solid #393939;border-bottom:1px solid #555"></div>
<div class="t" style="left:742px;top:211px;color:#e8e8e8;transform:translateX(-100%)">Preset:</div>
<div class="dd" style="left:746px;top:206px;width:163px;height:19px;"><div class="dv" style="left:143px"></div><div class="arr" style="left:150px;top:6px;border-top-color:#e6e6e6"></div></div>
<div class="t" style="left:752px;top:210px;color:#e8e8e8">[Outline]</div>
<svg class="a" style="left:920px;top:210px" width="13" height="10" viewBox="0 0 13 10"><path d="M0 0.5h1M0 3.5h1M0 6.5h1M0 9.5h1M2 0.5h11M2 3.5h11M2 6.5h11M2 9.5h11" stroke="#d0d0d0"/></svg>
<div class="t" style="left:742px;top:240px;color:#e8e8e8;transform:translateX(-100%)">View:</div>
<div class="dd" style="left:746px;top:235px;width:163px;height:19px;"><div class="dv" style="left:143px"></div><div class="arr" style="left:150px;top:6px;border-top-color:#e6e6e6"></div></div>
<div class="t" style="left:752px;top:239px;color:#e8e8e8">Outlines</div>
<svg class="a" style="left:920px;top:239px" width="14" height="11" viewBox="0 0 14 11"><path d="M0.5 5.5C3 1 11 1 13.5 5.5C11 10 3 10 0.5 5.5z" fill="#9a9a9a"/><circle cx="7" cy="5.3" r="3" fill="#3a3a3a"/><circle cx="8" cy="4.3" r="1" fill="#aaa"/></svg>
<div class="t" style="left:742px;top:268px;color:#e8e8e8;transform:translateX(-100%)">Mode:</div>
<div class="dd" style="left:746px;top:263px;width:163px;height:19px;"><div class="dv" style="left:143px"></div><div class="arr" style="left:150px;top:6px;border-top-color:#e6e6e6"></div></div>
<div class="t" style="left:752px;top:267px;color:#e8e8e8">Black and White</div>
<div class="t" style="left:742px;top:294px;color:#8a8a8a;transform:translateX(-100%)">Palette:</div>
<div class="dd" style="left:746px;top:289px;width:163px;height:19px;background:linear-gradient(#565656,#4e4e4e);border-color:#3a3a3a"><div class="dv" style="left:143px"></div><div class="arr" style="left:150px;top:6px;border-top-color:#6e6e6e"></div></div>
<div class="t" style="left:752px;top:293px;color:#8c8c8c">Limited</div>
<div class="t" style="left:742px;top:320px;color:#e8e8e8;transform:translateX(-100%)">Threshold:</div>
<div class="a" style="left:746px;top:323px;width:148px;height:5px;background:#303030;border:1px solid #2a2a2a;border-bottom-color:#555;border-radius:2px"></div>
<svg class="a" style="left:816px;top:318px" width="10" height="13" viewBox="0 0 10 13"><path d="M0.5 12.5V4.5L5 0.5l4.5 4v8z" fill="#6a6a6a" stroke="#2a2a2a"/></svg>
<div class="a" style="left:901px;top:316px;width:37px;height:17px;background:#a7a7a7;border:1px solid #2a2a2a"></div>
<div class="t" style="left:906px;top:319px;color:#111">128</div>
<div class="t" style="left:745px;top:336px;color:#e8e8e8">Less</div>
<div class="t" style="left:895px;top:336px;color:#e8e8e8;transform:translateX(-100%)">More</div>
<svg class="a" style="left:699px;top:358px" width="12" height="8" viewBox="0 0 12 8"><path d="M0.5 0.5h10l-5 6z" fill="#cfcfcf"/></svg>
<div class="t" style="left:715px;top:358px;color:#e8e8e8">Advanced</div>
<div class="a" style="left:763px;top:361px;width:176px;height:2px;border-top:1px solid #393939;border-bottom:1px solid #555"></div>
<div class="t" style="left:742px;top:384px;color:#e8e8e8;transform:translateX(-100%)">Paths:</div>
<div class="a" style="left:746px;top:387px;width:148px;height:5px;background:#303030;border:1px solid #2a2a2a;border-bottom-color:#555;border-radius:2px"></div>
<svg class="a" style="left:815px;top:382px" width="10" height="13" viewBox="0 0 10 13"><path d="M0.5 12.5V4.5L5 0.5l4.5 4v8z" fill="#6a6a6a" stroke="#2a2a2a"/></svg>
<div class="a" style="left:901px;top:380px;width:37px;height:17px;background:#a7a7a7;border:1px solid #2a2a2a"></div>
<div class="t" style="left:906px;top:383px;color:#111">50%</div>
<div class="t" style="left:745px;top:400px;color:#e8e8e8">Low</div>
<div class="t" style="left:895px;top:400px;color:#e8e8e8;transform:translateX(-100%)">High</div>
<div class="t" style="left:742px;top:422px;color:#e8e8e8;transform:translateX(-100%)">Corners:</div>
<div class="a" style="left:746px;top:425px;width:148px;height:5px;background:#303030;border:1px solid #2a2a2a;border-bottom-color:#555;border-radius:2px"></div>
<svg class="a" style="left:850px;top:420px" width="10" height="13" viewBox="0 0 10 13"><path d="M0.5 12.5V4.5L5 0.5l4.5 4v8z" fill="#6a6a6a" stroke="#2a2a2a"/></svg>
<div class="a" style="left:901px;top:418px;width:37px;height:17px;background:#a7a7a7;border:1px solid #2a2a2a"></div>
<div class="t" style="left:906px;top:421px;color:#111">75%</div>
<div class="t" style="left:745px;top:438px;color:#e8e8e8">Less</div>
<div class="t" style="left:895px;top:438px;color:#e8e8e8;transform:translateX(-100%)">More</div>
<div class="t" style="left:742px;top:460px;color:#e8e8e8;transform:translateX(-100%)">Noise:</div>
<div class="a" style="left:746px;top:463px;width:148px;height:5px;background:#303030;border:1px solid #2a2a2a;border-bottom-color:#555;border-radius:2px"></div>
<svg class="a" style="left:773px;top:458px" width="10" height="13" viewBox="0 0 10 13"><path d="M0.5 12.5V4.5L5 0.5l4.5 4v8z" fill="#6a6a6a" stroke="#2a2a2a"/></svg>
<div class="a" style="left:901px;top:456px;width:37px;height:17px;background:#a7a7a7;border:1px solid #2a2a2a"></div>
<div class="t" style="left:906px;top:459px;color:#111">20 px</div>
<div class="t" style="left:745px;top:476px;color:#e8e8e8">1</div>
<div class="t" style="left:893px;top:476px;color:#e8e8e8;transform:translateX(-100%)">100</div>
<div class="t" style="left:742px;top:499px;color:#e8e8e8;transform:translateX(-100%)">Method:</div>
<div class="a" style="left:746px;top:493px;width:51px;height:22px;background:#2c2c2c;border:1px solid #2a2a2a"></div>
<div class="a" style="left:747px;top:494px;width:24px;height:20px;background:#353535"></div>
<div class="a" style="left:772px;top:494px;width:24px;height:20px;background:#5a5a5a"></div>
<svg class="a" style="left:751px;top:497px" width="44" height="14" viewBox="0 0 44 14"><rect x="1" y="3" width="9" height="9" fill="#aaa"/><circle cx="10" cy="7.5" r="4.5" fill="#444" stroke="#ccc" stroke-width="1.2"/>
<rect x="25" y="3" width="9" height="9" fill="#aaa"/><circle cx="34" cy="7.5" r="4.5" fill="#8a8a8a" stroke="#ccc" stroke-width="1.2"/></svg>
<div class="t" style="left:742px;top:524px;color:#e8e8e8;transform:translateX(-100%)">Create:</div>
<div class="a" style="left:746px;top:522px;width:12px;height:13px;background:linear-gradient(#5c5c5c,#484848);border:1px solid #262626"></div>
<div class="t" style="left:762px;top:523px;color:#e8e8e8">Fills</div>
<div class="a" style="left:785px;top:522px;width:12px;height:13px;background:linear-gradient(#5c5c5c,#484848);border:1px solid #262626"></div>
<svg class="a" style="left:785px;top:520px" width="14" height="14" viewBox="0 0 14 14"><path d="M2.5 7l3 4 6-9" fill="none" stroke="#e0e0e0" stroke-width="1.5"/></svg>
<div class="t" style="left:801px;top:523px;color:#e8e8e8">Strokes</div>
<div class="t" style="left:742px;top:548px;color:#e8e8e8;transform:translateX(-100%)">Stroke:</div>
<div class="a" style="left:746px;top:542px;width:66px;height:19px;background:#a8a8a8;border:1px solid #2a2a2a"></div>
<div class="a" style="left:747px;top:543px;width:15px;height:17px;background:#4a4a4a;border-right:1px solid #2a2a2a"></div>
<div class="a" style="left:747px;top:551px;width:15px;height:1px;background:#2e2e2e"></div>
<svg class="a" style="left:749px;top:544px" width="11" height="15" viewBox="0 0 11 15"><path d="M1.5 5.5l4-4 4 4z" fill="#d0d0d0"/><path d="M1.5 9.5l4 4 4-4z" fill="#d0d0d0"/></svg>
<div class="t" style="left:766px;top:547px;color:#111">50 px</div>
<div class="t" style="left:742px;top:570px;color:#e8e8e8;transform:translateX(-100%)">Options:</div>
<div class="a" style="left:746px;top:568px;width:12px;height:13px;background:linear-gradient(#5c5c5c,#484848);border:1px solid #262626"></div>
<div class="t" style="left:762px;top:569px;color:#e8e8e8">Snap Curves To Lines</div>
<div class="a" style="left:746px;top:588px;width:12px;height:13px;background:linear-gradient(#5c5c5c,#484848);border:1px solid #262626"></div>
<div class="t" style="left:762px;top:589px;color:#e8e8e8">Ignore White</div>
<div class="a" style="left:694px;top:607px;width:245px;height:2px;border-top:1px solid #393939;border-bottom:1px solid #555"></div>
<svg class="a" style="left:694px;top:621px" width="16" height="16" viewBox="0 0 16 16"><circle cx="8" cy="8" r="7" fill="#a6a6a6"/><rect x="7" y="6.5" width="2" height="6" fill="#333"/><rect x="7" y="3.5" width="2" height="2" fill="#333"/></svg>
<div class="t" style="left:720px;top:615px;color:#e8e8e8">Paths:</div>
<div class="t" style="left:766px;top:615px;color:#e8e8e8">9</div>
<div class="t" style="left:839px;top:615px;color:#e8e8e8">Colors:</div>
<div class="t" style="left:877px;top:615px;color:#e8e8e8">1</div>
<div class="t" style="left:720px;top:633px;color:#e8e8e8">Anchors:</div>
<div class="t" style="left:766px;top:633px;color:#e8e8e8">35</div>
<div class="a" style="left:694px;top:650px;width:245px;height:2px;border-top:1px solid #393939;border-bottom:1px solid #555"></div>
<div class="a" style="left:695px;top:661px;width:12px;height:13px;background:linear-gradient(#5c5c5c,#484848);border:1px solid #262626"></div>
<svg class="a" style="left:695px;top:659px" width="14" height="14" viewBox="0 0 14 14"><path d="M2.5 7l3 4 6-9" fill="none" stroke="#e0e0e0" stroke-width="1.5"/></svg>
<div class="t" style="left:710px;top:661px;color:#e8e8e8">Preview</div>
<div class="a" style="left:868px;top:658px;width:70px;height:19px;background:linear-gradient(#525252,#4c4c4c);border:1px solid #333"></div>
<div class="t" style="left:890px;top:662px;color:#8e8e8e">Trace</div>
</body></html>
